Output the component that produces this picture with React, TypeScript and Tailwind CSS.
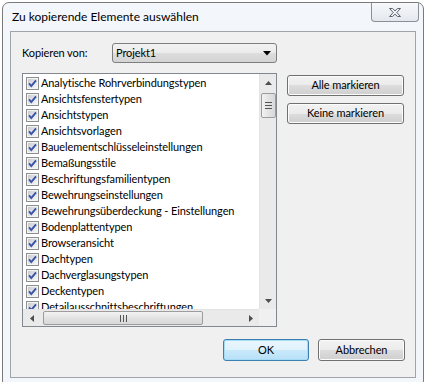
import React from "react";

const items = [
  "Analytische Rohrverbindungstypen",
  "Ansichtsfenstertypen",
  "Ansichtstypen",
  "Ansichtsvorlagen",
  "Bauelementschlüsseleinstellungen",
  "Bemaßungsstile",
  "Beschriftungsfamilientypen",
  "Bewehrungseinstellungen",
  "Bewehrungsüberdeckung - Einstellungen",
  "Bodenplattentypen",
  "Browseransicht",
  "Dachtypen",
  "Dachverglasungstypen",
  "Deckentypen",
  "Detailausschnittsbeschriftungen",
];

function CheckBox() {
  return (
    <svg width="13" height="13" viewBox="0 0 13 13" className="shrink-0">
      <defs>
        <linearGradient id="cbg" x1="0" y1="0" x2="1" y2="1">
          <stop offset="0" stopColor="#c9ccd1" />
          <stop offset="1" stopColor="#f7f7f7" />
        </linearGradient>
      </defs>
      <rect x="0.5" y="0.5" width="12" height="12" fill="#f4f4f4" stroke="#8e8f8f" />
      <rect x="2" y="2" width="9" height="9" fill="url(#cbg)" />
      <path d="M3 6.3 L5.3 9 L10 3.3" fill="none" stroke="#3652a7" strokeWidth="1.9" strokeLinejoin="miter" />
    </svg>
  );
}

function Btn({ children, def }: { children: React.ReactNode; def?: boolean }) {
  return (
    <div
      className={
        def
          ? "flex h-full w-full items-center justify-center rounded-[3px] border border-[#3c7fb1] bg-[linear-gradient(#eaf6fd_0%,#dff2fc_50%,#c9e9fb_50%,#b8e0f7_100%)] shadow-[inset_0_0_0_1px_#a6dbf5]"
          : "flex h-full w-full items-center justify-center rounded-[3px] border border-[#707070] bg-[linear-gradient(#f2f2f2_0%,#ebebeb_50%,#dddddd_50%,#cfcfcf_100%)] shadow-[inset_0_0_0_1px_#fcfcfc]"
      }
    >
      {children}
    </div>
  );
}

export default function App() {
  return (
    <div
      className="relative h-[382px] w-[426px] overflow-hidden bg-white text-[11px] tracking-[-0.1px] text-black"
      style={{ fontFamily: 'Lato, "Noto Sans", sans-serif' }}
    >
      <div className="ml-[2px] mt-[2px] flex h-[386px] w-[422px] flex-col rounded-[7px] border border-[#7a7a7a] bg-[#f3f6fa]">
        {/* title bar */}
        <div className="flex h-[28px] items-start justify-between">
          <div className="pl-[9px] pt-[6px] text-[12px] leading-[16px] tracking-normal">Zu kopierende Elemente auswählen</div>
          <div className="mr-[4px] flex h-[19px] w-[48px] items-center justify-center rounded-b-[4px] border border-t-0 border-[#8b8f96] bg-[linear-gradient(#f7f8fa,#e4e8ee)]">
            <svg width="14" height="11" viewBox="0 0 14 11">
              <path
                d="M1.5 1.5 L4.5 1.5 L7 3.8 L9.5 1.5 L12.5 1.5 L8.8 5.5 L12.5 9.5 L9.5 9.5 L7 7.2 L4.5 9.5 L1.5 9.5 L5.2 5.5 Z"
                fill="#eef0f4"
                stroke="#5e6471"
                strokeWidth="1"
                strokeLinejoin="round"
              />
            </svg>
          </div>
        </div>
        {/* client area */}
        <div className="ml-[7px] h-[347px] w-[406px] border border-[#a0a3a8] bg-[#f0f0f0] pl-[11px] pt-[11px]">
          <div className="flex h-[20px] items-center">
            <div className="w-[90px]">Kopieren von:</div>
            <div className="flex h-[20px] w-[165px] items-center justify-between rounded-[3px] border border-[#7e7e7e] bg-[linear-gradient(#f2f2f2_0%,#ebebeb_50%,#dddddd_50%,#d4d4d4_100%)] pl-[3px] pr-[5px]">
              <span>Projekt1</span>
              <svg width="8" height="5" viewBox="0 0 8 5">
                <path d="M0 0 L8 0 L4 4.5 Z" fill="#000" />
              </svg>
            </div>
          </div>

          <div className="mt-[10px] flex">
            {/* list box */}
            <div className="flex h-[254px] w-[255px] flex-col border border-[#828790] bg-white">
              <div className="flex min-h-0 flex-1">
                <div className="min-w-0 flex-1 overflow-hidden pt-[1px]">
                  {items.map((t) => (
                    <div key={t} className="flex h-[16px] items-center whitespace-nowrap pl-[3px]">
                      <CheckBox />
                      <span className="ml-[2px] leading-[16px]">{t}</span>
                    </div>
                  ))}
                </div>
                {/* vertical scrollbar */}
                <div className="flex w-[17px] flex-col items-center border-l border-[#e3e3e3] bg-[#eaeaea]">
                  <div className="flex h-[17px] w-full items-center justify-center">
                    <svg width="7" height="4" viewBox="0 0 7 4">
                      <path d="M3.5 0 L7 4 L0 4 Z" fill="#4d4d4d" />
                    </svg>
                  </div>
                  <div className="mt-[2px] flex h-[25px] w-[15px] flex-col items-center justify-center gap-[2px] rounded-[2px] border border-[#9c9c9c] bg-[linear-gradient(90deg,#f3f3f3,#e3e3e3_50%,#d8d8d8)]">
                    <div className="h-px w-[7px] bg-[#555]" />
                    <div className="h-px w-[7px] bg-[#555]" />
                    <div className="h-px w-[7px] bg-[#555]" />
                  </div>
                  <div className="flex-1" />
                  <div className="flex h-[17px] w-full items-center justify-center">
                    <svg width="7" height="4" viewBox="0 0 7 4">
                      <path d="M0 0 L7 0 L3.5 4 Z" fill="#4d4d4d" />
                    </svg>
                  </div>
                </div>
              </div>
              {/* horizontal scrollbar */}
              <div className="flex h-[17px]">
                <div className="flex flex-1 items-center border-t border-[#e3e3e3] bg-[#eaeaea]">
                  <div className="flex h-full w-[17px] items-center justify-center">
                    <svg width="4" height="7" viewBox="0 0 4 7">
                      <path d="M4 0 L4 7 L0 3.5 Z" fill="#4d4d4d" />
                    </svg>
                  </div>
                  <div className="ml-[3px] flex h-[14px] w-[160px] items-center justify-center gap-[2px] rounded-[2px] border border-[#9c9c9c] bg-[linear-gradient(#f3f3f3,#e3e3e3_50%,#d8d8d8)]">
                    <div className="h-[7px] w-px bg-[#555]" />
                    <div className="h-[7px] w-px bg-[#555]" />
                    <div className="h-[7px] w-px bg-[#555]" />
                  </div>
                  <div className="flex-1" />
                  <div className="flex h-full w-[17px] items-center justify-center">
                    <svg width="4" height="7" viewBox="0 0 4 7">
                      <path d="M0 0 L4 3.5 L0 7 Z" fill="#4d4d4d" />
                    </svg>
                  </div>
                </div>
                <div className="w-[17px] bg-[#f0f0f0]" />
              </div>
            </div>

            {/* right buttons */}
            <div className="ml-[10px] flex flex-col pt-[2px]">
              <div className="h-[21px] w-[117px]">
                <Btn>Alle markieren</Btn>
              </div>
              <div className="mt-[7px] h-[21px] w-[117px]">
                <Btn>Keine markieren</Btn>
              </div>
            </div>
          </div>

          <div className="mt-[12px] flex justify-end gap-[9px] pr-[10px]">
            <div className="h-[22px] w-[86px]">
              <Btn def>OK</Btn>
            </div>
            <div className="h-[22px] w-[87px]">
              <Btn>Abbrechen</Btn>
            </div>
          </div>
        </div>
      </div>
    </div>
  );
}
